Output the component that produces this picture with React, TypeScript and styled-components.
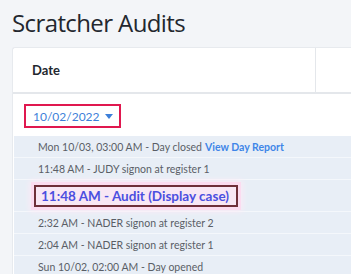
import { createGlobalStyle, styled } from "styled-components";

const GlobalStyle = createGlobalStyle`
  html, body {
    margin: 0;
    padding: 0;
    background: #f3f5f8;
    overflow: hidden;
    font-family: Lato, "Open Sans", sans-serif;
  }
`;

const Page = styled.main`
  padding: 6px 0 0 12px;
`;

const Title = styled.h1`
  margin: 0;
  font-family: "Open Sans", sans-serif;
  font-size: 24px;
  font-weight: 400;
  line-height: 34px;
  color: #23272e;
  letter-spacing: -0.6px;
`;

const Card = styled.section`
  margin-top: 7px;
  width: 400px;
  background: #fff;
  border: 1px solid #e7eaee;
  border-right: none;
  border-radius: 3px 0 0 0;
`;

const HeaderRow = styled.div`
  display: grid;
  grid-template-columns: 302px 1fr;
  height: 44px;
  border-bottom: 2px solid #e4e7eb;
`;

const HeaderCell = styled.div`
  display: flex;
  align-items: center;
  padding-left: 19px;
  font-size: 13px;
  font-weight: 700;
  color: #23272e;
  & + & {
    border-left: 1px solid #e4e7eb;
  }
`;

const Body = styled.div`
  padding: 10px 0 0 1px;
`;

const DateToggle = styled.button`
  display: inline-flex;
  align-items: center;
  gap: 5px;
  margin-left: 10px;
  height: 24px;
  padding: 0 6px 0 7px;
  border: 2px solid #e0184f;
  background: transparent;
  font-family: inherit;
  font-size: 12px;
  color: #3d7fd9;
  cursor: pointer;
`;

const Caret = styled.span`
  width: 0;
  height: 0;
  border-left: 4px solid transparent;
  border-right: 4px solid transparent;
  border-top: 5px solid #3d7fd9;
`;

const List = styled.ul`
  list-style: none;
  margin: 8px 0 0;
  padding: 0;
`;

const Row = styled.li<{ $tall?: boolean }>`
  display: flex;
  align-items: center;
  height: ${(p) => (p.$tall ? "31px" : "21px")};
  padding-left: ${(p) => (p.$tall ? "20px" : "24px")};
  background: #e8eef6;
  border-bottom: 1px solid #f4f7fb;
  font-size: 10.5px;
  color: #5a5e66;
  white-space: nowrap;
`;

const Link = styled.a`
  margin-left: 3px;
  font-weight: 700;
  color: #3f86e8;
  text-decoration: none;
`;

const Highlight = styled.span`
  display: inline-flex;
  align-items: center;
  height: 18px;
  padding: 0 7px 0 5px;
  border: 2px solid #6e2f39;
  background: #f8e7f4;
  box-shadow: 0 0 0 3px #fbdcf0, 0 0 6px 4px #fdeaf6;
  font-size: 13.5px;
  font-weight: 700;
  color: #4b4fe0;
`;

const events = ["11:48 AM - JUDY signon at register 1"];

const later = [
  "2:32 AM - NADER signon at register 2",
  "2:04 AM - NADER signon at register 1",
  "Sun 10/02, 02:00 AM - Day opened",
];

export default function App() {
  return (
    <>
      <GlobalStyle />
      <Page>
        <Title>Scratcher Audits</Title>
        <Card>
          <HeaderRow>
            <HeaderCell>Date</HeaderCell>
            <HeaderCell />
          </HeaderRow>
          <Body>
            <DateToggle type="button">
              10/02/2022
              <Caret />
            </DateToggle>
            <List>
              <Row>
                Mon 10/03, 03:00 AM - Day closed
                <Link href="#">View Day Report</Link>
              </Row>
              {events.map((e) => (
                <Row key={e}>{e}</Row>
              ))}
              <Row $tall>
                <Highlight>11:48 AM - Audit (Display case)</Highlight>
              </Row>
              {later.map((e) => (
                <Row key={e}>{e}</Row>
              ))}
            </List>
          </Body>
        </Card>
      </Page>
    </>
  );
}
